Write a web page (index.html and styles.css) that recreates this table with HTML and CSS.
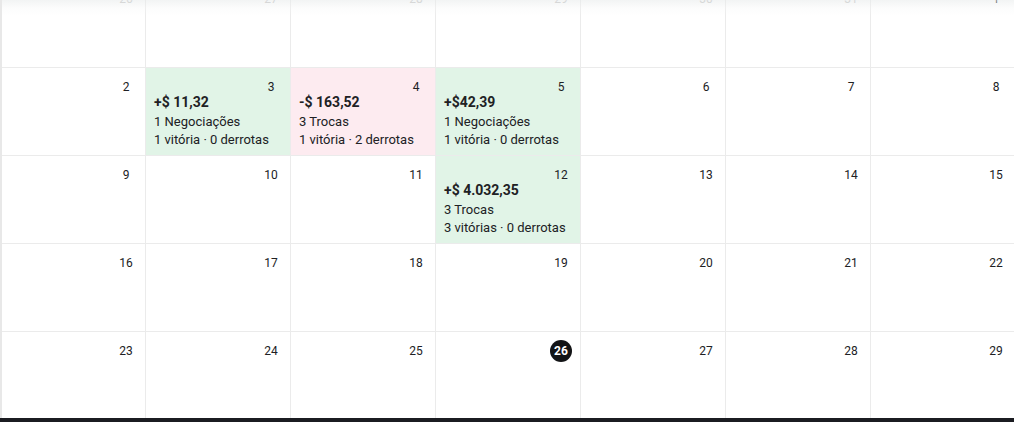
FILE: index.html
```html
<!DOCTYPE html>
<html lang="pt-BR">
<head>
<meta charset="utf-8">
<title>Calendário</title>
<link rel="stylesheet" href="styles.css">
</head>
<body>
<div class="viewport">
  <div class="fade"></div>
  <div class="calendar">
    <div class="cell muted"><div class="head"><span class="day">26</span></div></div>
    <div class="cell muted"><div class="head"><span class="day">27</span></div></div>
    <div class="cell muted"><div class="head"><span class="day">28</span></div></div>
    <div class="cell muted"><div class="head"><span class="day">29</span></div></div>
    <div class="cell muted"><div class="head"><span class="day">30</span></div></div>
    <div class="cell muted"><div class="head"><span class="day">31</span></div></div>
    <div class="cell"><div class="head"><span class="day">1</span></div></div>

    <div class="cell"><div class="head"><span class="day">2</span></div></div>
    <div class="cell win">
      <div class="head"><span class="day">3</span></div>
      <div class="amount">+$ 11,32</div>
      <div class="line">1 Negociações</div>
      <div class="line">1 vitória · 0 derrotas</div>
    </div>
    <div class="cell loss">
      <div class="head"><span class="day">4</span></div>
      <div class="amount">-$ 163,52</div>
      <div class="line">3 Trocas</div>
      <div class="line">1 vitória · 2 derrotas</div>
    </div>
    <div class="cell win">
      <div class="head"><span class="day">5</span></div>
      <div class="amount">+$42,39</div>
      <div class="line">1 Negociações</div>
      <div class="line">1 vitória · 0 derrotas</div>
    </div>
    <div class="cell"><div class="head"><span class="day">6</span></div></div>
    <div class="cell"><div class="head"><span class="day">7</span></div></div>
    <div class="cell"><div class="head"><span class="day">8</span></div></div>

    <div class="cell"><div class="head"><span class="day">9</span></div></div>
    <div class="cell"><div class="head"><span class="day">10</span></div></div>
    <div class="cell"><div class="head"><span class="day">11</span></div></div>
    <div class="cell win">
      <div class="head"><span class="day">12</span></div>
      <div class="amount">+$ 4.032,35</div>
      <div class="line">3 Trocas</div>
      <div class="line">3 vitórias · 0 derrotas</div>
    </div>
    <div class="cell"><div class="head"><span class="day">13</span></div></div>
    <div class="cell"><div class="head"><span class="day">14</span></div></div>
    <div class="cell"><div class="head"><span class="day">15</span></div></div>

    <div class="cell"><div class="head"><span class="day">16</span></div></div>
    <div class="cell"><div class="head"><span class="day">17</span></div></div>
    <div class="cell"><div class="head"><span class="day">18</span></div></div>
    <div class="cell"><div class="head"><span class="day">19</span></div></div>
    <div class="cell"><div class="head"><span class="day">20</span></div></div>
    <div class="cell"><div class="head"><span class="day">21</span></div></div>
    <div class="cell"><div class="head"><span class="day">22</span></div></div>

    <div class="cell"><div class="head"><span class="day">23</span></div></div>
    <div class="cell"><div class="head"><span class="day">24</span></div></div>
    <div class="cell"><div class="head"><span class="day">25</span></div></div>
    <div class="cell"><div class="head"><span class="day today">26</span></div></div>
    <div class="cell"><div class="head"><span class="day">27</span></div></div>
    <div class="cell"><div class="head"><span class="day">28</span></div></div>
    <div class="cell"><div class="head"><span class="day">29</span></div></div>
  </div>
</div>
<div class="bottom-bar"></div>
</body>
</html>
```

FILE: styles.css
```css
* {
  box-sizing: border-box;
}

html, body {
  margin: 0;
  padding: 0;
  height: 422px;
  overflow: hidden;
  background: #ffffff;
  font-family: Roboto, "Liberation Sans", Arial, sans-serif;
  color: #202124;
}

body {
  display: flex;
  flex-direction: column;
}

.viewport {
  position: relative;
  height: 418px;
  overflow: hidden;
  border-left: 2px solid #e8e8e8;
}

.fade {
  position: absolute;
  left: 0;
  right: 0;
  top: 0;
  height: 16px;
  background: linear-gradient(to bottom, rgba(232, 235, 235, 0.55), rgba(245, 246, 246, 0.3) 50%, rgba(255, 255, 255, 0));
  z-index: 2;
}

.calendar {
  display: grid;
  grid-template-columns: 144px repeat(6, 145px);
  grid-auto-rows: 88px;
  margin-top: -20px;
  width: 1016px;
}

.cell {
  border-right: 1px solid #ebebeb;
  border-bottom: 1px solid #ebebeb;
  padding: 8px 8px 0 8px;
  background: #ffffff;
}

.cell.win {
  background: #e1f4e7;
}

.cell.loss {
  background: #fdebf0;
}

.head {
  display: flex;
  justify-content: flex-end;
  height: 16px;
}

.day {
  display: block;
  width: 22px;
  height: 22px;
  line-height: 22px;
  text-align: center;
  font-size: 12px;
  color: #202124;
  border-radius: 50%;
  flex: none;
}

.muted .day {
  color: #c4c4c4;
}

.day.today {
  background: #131416;
  color: #ffffff;
  font-weight: 700;
}

.amount {
  font-size: 14px;
  font-weight: 700;
  line-height: 20px;
  margin-bottom: 1px;
  color: #202124;
}

.line {
  font-size: 13px;
  line-height: 17.5px;
  color: #202124;
  white-space: nowrap;
}

.bottom-bar {
  height: 4px;
  background: #1b1c21;
  flex: none;
}
```
